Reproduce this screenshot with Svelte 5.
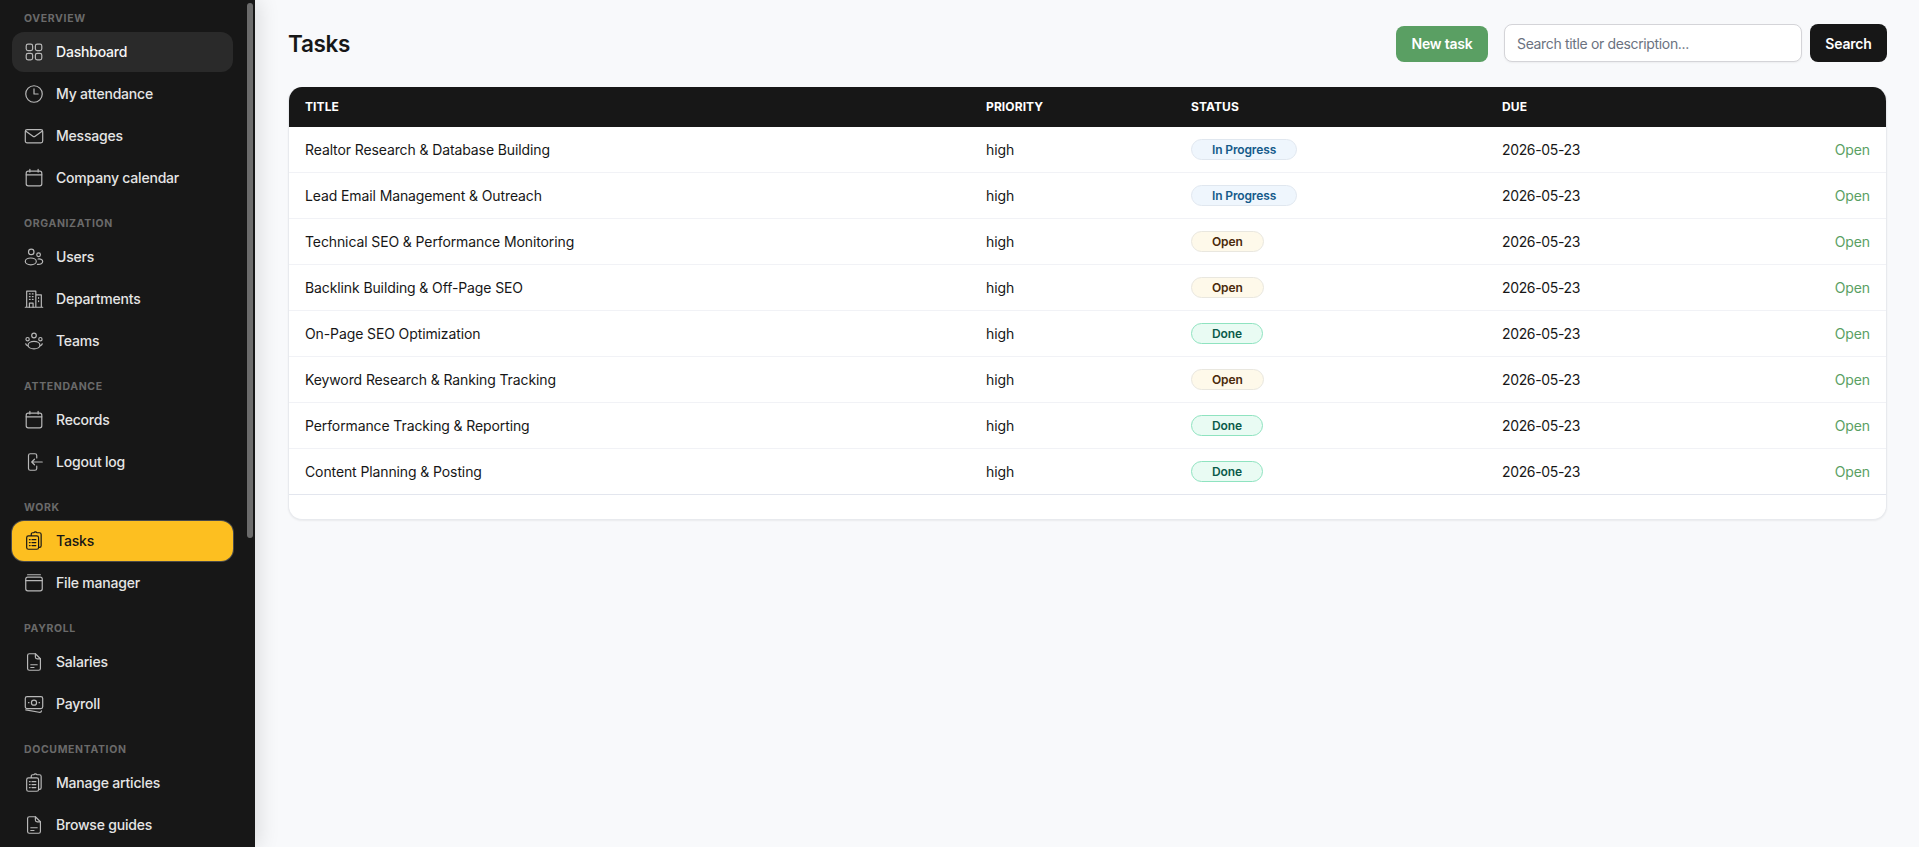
<script lang="ts">
  type Item = { label: string; icon: string; active?: boolean; current?: boolean };
  type Section = { title: string; items: Item[] };

  const sections: Section[] = [
    {
      title: 'Overview',
      items: [
        { label: 'Dashboard', icon: 'grid', current: true },
        { label: 'My attendance', icon: 'clock' },
        { label: 'Messages', icon: 'mail' },
        { label: 'Company calendar', icon: 'calendar' },
      ],
    },
    {
      title: 'Organization',
      items: [
        { label: 'Users', icon: 'users' },
        { label: 'Departments', icon: 'building' },
        { label: 'Teams', icon: 'team' },
      ],
    },
    {
      title: 'Attendance',
      items: [
        { label: 'Records', icon: 'calendar' },
        { label: 'Logout log', icon: 'logout' },
      ],
    },
    {
      title: 'Work',
      items: [
        { label: 'Tasks', icon: 'clipboard', active: true },
        { label: 'File manager', icon: 'folder' },
      ],
    },
    {
      title: 'Payroll',
      items: [
        { label: 'Salaries', icon: 'doc' },
        { label: 'Payroll', icon: 'money' },
      ],
    },
    {
      title: 'Documentation',
      items: [
        { label: 'Manage articles', icon: 'clipboard' },
        { label: 'Browse guides', icon: 'doc' },
      ],
    },
  ];

  const tasks = [
    { title: 'Realtor Research & Database Building', status: 'In Progress' },
    { title: 'Lead Email Management & Outreach', status: 'In Progress' },
    { title: 'Technical SEO & Performance Monitoring', status: 'Open' },
    { title: 'Backlink Building & Off-Page SEO', status: 'Open' },
    { title: 'On-Page SEO Optimization', status: 'Done' },
    { title: 'Keyword Research & Ranking Tracking', status: 'Open' },
    { title: 'Performance Tracking & Reporting', status: 'Done' },
    { title: 'Content Planning & Posting', status: 'Done' },
  ];

  const statusClass = (s: string) => s.toLowerCase().replace(' ', '-');
</script>

{#snippet icon(name: string)}
  <svg class="icon" viewBox="0 0 24 24" fill="none" stroke="currentColor" stroke-width="1.3" stroke-linecap="round" stroke-linejoin="round">
    {#if name === 'grid'}
      <rect x="3.5" y="3.5" width="7" height="7" rx="2" />
      <rect x="13.500" y="3.5" width="7" height="7" rx="2" />
      <rect x="3.5" y="13.500" width="7" height="7" rx="2" />
      <rect x="13.500" y="13.500" width="7" height="7" rx="2" />
    {:else if name === 'clock'}
      <circle cx="12" cy="12" r="9" />
      <path d="M12 6.500V12h4.500" />
    {:else if name === 'mail'}
      <rect x="2.500" y="5" width="19" height="14.500" rx="2" />
      <path d="M2.800 6.500l8 5.800a2 2 0 0 0 2.400 0l8-5.800" />
    {:else if name === 'calendar'}
      <path d="M7.500 2.500v3M16.500 2.500v3" />
      <rect x="3.500" y="4.500" width="17" height="16" rx="2.200" />
      <path d="M3.500 8.500h17" />
    {:else if name === 'users'}
      <circle cx="9" cy="6.500" r="3" />
      <circle cx="17" cy="9.500" r="2" />
      <ellipse cx="8.500" cy="16.800" rx="6" ry="3.700" />
      <path d="M16.500 14.200c3-.4 5 .8 5 2.800s-2.300 3.300-5.800 3" />
    {:else if name === 'building'}
      <path d="M2.500 21h19M4 21V3.500h10V21M14 7.500h6V21" />
      <path d="M7 6.500h.8M10.200 6.500h.8M7 9.500h.8M10.200 9.500h.8M7 12.500h.8M10.200 12.500h.8M17 10.500v.8M17 14v.8" />
      <path d="M7 21v-4.500h4V21" />
    {:else if name === 'team'}
      <circle cx="12" cy="6" r="2.500" />
      <circle cx="5" cy="10" r="1.800" />
      <circle cx="19" cy="10" r="1.800" />
      <ellipse cx="12" cy="16.500" rx="6.500" ry="4" />
      <path d="M3 15c.3 1 1 1.700 2.200 2.200M21 15c-.3 1-1 1.700-2.200 2.200" />
    {:else if name === 'logout'}
      <path d="M15 7.500V5a2 2 0 0 0-2-2H8a2 2 0 0 0-2 2v14a2 2 0 0 0 2 2h5a2 2 0 0 0 2-2v-2.500" />
      <path d="M21 12H9.500M12.500 9L9.500 12l3 3" />
    {:else if name === 'clipboard'}
      <path d="M9 6V4.500C9 3.700 9.600 3 10.400 3h1.400a2 2 0 0 1 3.400 0h2.800c1 0 1.800.8 1.800 1.800v12.400c0 1-.8 1.800-1.800 1.800H17" />
      <rect x="4" y="6.500" width="13" height="14.500" rx="2" />
      <path d="M7 10.500h.8M9.800 10.500H14M7 13.700h.8M9.800 13.700H14M7 17h.8M9.800 17H14" />
    {:else if name === 'folder'}
      <path d="M5 3h14" />
      <rect x="3" y="5.500" width="18" height="15" rx="2.200" />
      <path d="M3 9.500h18" />
    {:else if name === 'doc'}
      <path d="M13.500 3H7a2 2 0 0 0-2 2v14a2 2 0 0 0 2 2h10a2 2 0 0 0 2-2V8.500L13.500 3z" />
      <path d="M13.500 3v3.500a2 2 0 0 0 2 2H19" />
      <path d="M8.500 15h7M8.500 18h3.500" />
    {:else if name === 'money'}
      <rect x="2.500" y="4" width="19" height="13" rx="2" />
      <circle cx="12" cy="10.500" r="2.800" />
      <path d="M6 10.500h.5M17.500 10.500h.5" />
      <path d="M3 18.500l14.500 2.500c1.200.2 2.500-.4 2.700-1.500" />
    {/if}
  </svg>
{/snippet}

<div class="layout">
  <aside class="sidebar">
    <nav class="nav">
      {#each sections as section}
        <div class="section">
          <div class="section-title">{section.title}</div>
          <ul class="items">
            {#each section.items as item}
              <li class="item" class:current={item.current} class:active={item.active}>
                {@render icon(item.icon)}
                <span class="item-label">{item.label}</span>
              </li>
            {/each}
          </ul>
        </div>
      {/each}
    </nav>
    <div class="scroll-thumb"></div>
  </aside>

  <main class="main">
    <header class="topbar">
      <h1>Tasks</h1>
      <div class="actions">
        <button class="btn-new">New task</button>
        <form class="search" onsubmit={(e) => e.preventDefault()}>
          <input type="text" placeholder="Search title or description..." />
          <button class="btn-search">Search</button>
        </form>
      </div>
    </header>

    <section class="card">
      <table>
        <colgroup>
          <col class="c-title" />
          <col class="c-priority" />
          <col class="c-status" />
          <col class="c-due" />
          <col />
        </colgroup>
        <thead>
          <tr>
            <th>Title</th>
            <th>Priority</th>
            <th>Status</th>
            <th>Due</th>
            <th></th>
          </tr>
        </thead>
        <tbody>
          {#each tasks as task}
            <tr>
              <td>{task.title}</td>
              <td>high</td>
              <td><span class="badge {statusClass(task.status)}">{task.status}</span></td>
              <td class="due">2026-05-23</td>
              <td class="link-cell"><span class="link">Open</span></td>
            </tr>
          {/each}
        </tbody>
      </table>
    </section>
  </main>
</div>

<style>
  :global(body) {
    margin: 0;
    background: #f8f9fb;
    font-family: Inter, 'Noto Sans', sans-serif;
    color: #171717;
  }

  .layout {
    display: flex;
    height: 847px;
    overflow: hidden;
  }

  .sidebar {
    width: 255px;
    flex: none;
    height: 847px;
    background: #171717;
    overflow: hidden;
    box-shadow: 4px 0 20px rgba(0, 0, 0, 0.12);
    position: relative;
    z-index: 1;
  }

  .scroll-thumb {
    position: absolute;
    top: 3px;
    right: 2px;
    width: 6px;
    height: 535px;
    background: #6b6b6b;
    border-radius: 3px;
  }

  .nav {
    padding: 12px 0 0 12px;
    width: 221px;
  }

  .section {
    margin-bottom: 19px;
  }

  .section-title {
    padding-left: 12px;
    font-size: 10.5px;
    line-height: 14px;
    font-weight: 700;
    letter-spacing: 0.06em;
    text-transform: uppercase;
    color: #6a6a6a;
    margin-bottom: 6px;
  }

  .items {
    list-style: none;
    margin: 0;
    padding: 0;
    display: flex;
    flex-direction: column;
    gap: 2px;
  }

  .item {
    display: flex;
    align-items: center;
    gap: 11px;
    height: 40px;
    padding-left: 11px;
    border-radius: 12px;
    font-size: 14px;
    font-weight: 500;
    letter-spacing: -0.2px;
    color: #e5e5e5;
  }

  .item-label {
    padding-bottom: 1px;
  }

  .item.current {
    background: #2a2a2a;
    color: #f5f5f5;
  }

  .item.active {
    background: #fdbf20;
    color: #171717;
    box-shadow: 0 0 0 1px #4a4a4a;
  }

  .icon {
    width: 22px;
    height: 22px;
    flex: none;
    color: #b8b8b8;
  }

  .item.active .icon {
    color: #171717;
  }

  .main {
    flex: 1;
    padding: 24px 32px 0 33px;
    min-width: 0;
  }

  .topbar {
    display: flex;
    align-items: center;
    justify-content: space-between;
    height: 38px;
    margin-bottom: 25px;
  }

  h1 {
    margin: 0;
    font-size: 22.5px;
    font-weight: 600;
    letter-spacing: -0.3px;
    color: #171717;
  }

  .actions {
    display: flex;
    align-items: center;
    gap: 16px;
  }

  button {
    font-family: inherit;
    font-size: 14px;
    font-weight: 600;
    letter-spacing: -0.2px;
    color: #fff;
    border: none;
    cursor: pointer;
  }

  .btn-new {
    width: 92px;
    height: 36px;
    background: #5a9f63;
    border-radius: 8px;
    margin-top: 2px;
    padding-bottom: 2px;
  }

  .search {
    display: flex;
    gap: 8px;
  }

  input {
    width: 298px;
    height: 38px;
    box-sizing: border-box;
    padding: 0 12px;
    border: 1px solid #d4d4d8;
    border-radius: 8px;
    background: #fff;
    font-family: inherit;
    font-size: 14px;
    letter-spacing: -0.35px;
    box-shadow: 0 1px 2px rgba(0, 0, 0, 0.05);
  }

  input::placeholder {
    color: #6b7280;
  }

  .btn-search {
    width: 77px;
    height: 38px;
    background: #171717;
    border-radius: 8px;
  }

  .card {
    background: #fff;
    border: 1px solid #e8eaee;
    border-top: none;
    border-radius: 14px;
    overflow: hidden;
    box-shadow: 0 1px 2px rgba(0, 0, 0, 0.06);
    padding-bottom: 24px;
  }

  table {
    width: 100%;
    border-collapse: separate;
    border-spacing: 0;
    table-layout: fixed;
    font-size: 14px;
    letter-spacing: -0.11px;
  }

  .c-title {
    width: 681px;
  }

  .c-priority {
    width: 205px;
  }

  .c-status {
    width: 311px;
  }

  .c-due {
    width: 240px;
  }

  thead tr {
    background: #171717;
  }

  th {
    height: 40px;
    padding: 0 16px 1px;
    text-align: left;
    font-size: 12px;
    font-weight: 700;
    letter-spacing: 0.1px;
    text-transform: uppercase;
    color: #fff;
    box-sizing: border-box;
  }

  td {
    height: 46px;
    padding: 0 16px;
    border-bottom: 1px solid #f1f2f6;
    color: #171717;
    box-sizing: border-box;
  }

  tbody tr:last-child td {
    border-bottom: 1px solid #e3e6ee;
  }

  .due {
    letter-spacing: -0.35px;
  }

  .link-cell {
    text-align: right;
  }

  .link {
    color: #5a9f63;
  }

  .badge {
    display: inline-block;
    height: 21px;
    line-height: 19px;
    padding: 0 20px;
    box-sizing: border-box;
    border-radius: 999px;
    border: 1px solid;
    font-size: 12px;
    font-weight: 600;
    letter-spacing: -0.13px;
    vertical-align: middle;
  }

  .in-progress {
    background: #eff6fd;
    border-color: #e0e7ef;
    color: #155a8a;
  }

  .open {
    background: #fef9ea;
    border-color: #e9e7df;
    color: #4a2a0a;
  }

  .done {
    background: #e9fbf3;
    border-color: #8fe3c0;
    color: #0b5a4a;
  }
</style>
